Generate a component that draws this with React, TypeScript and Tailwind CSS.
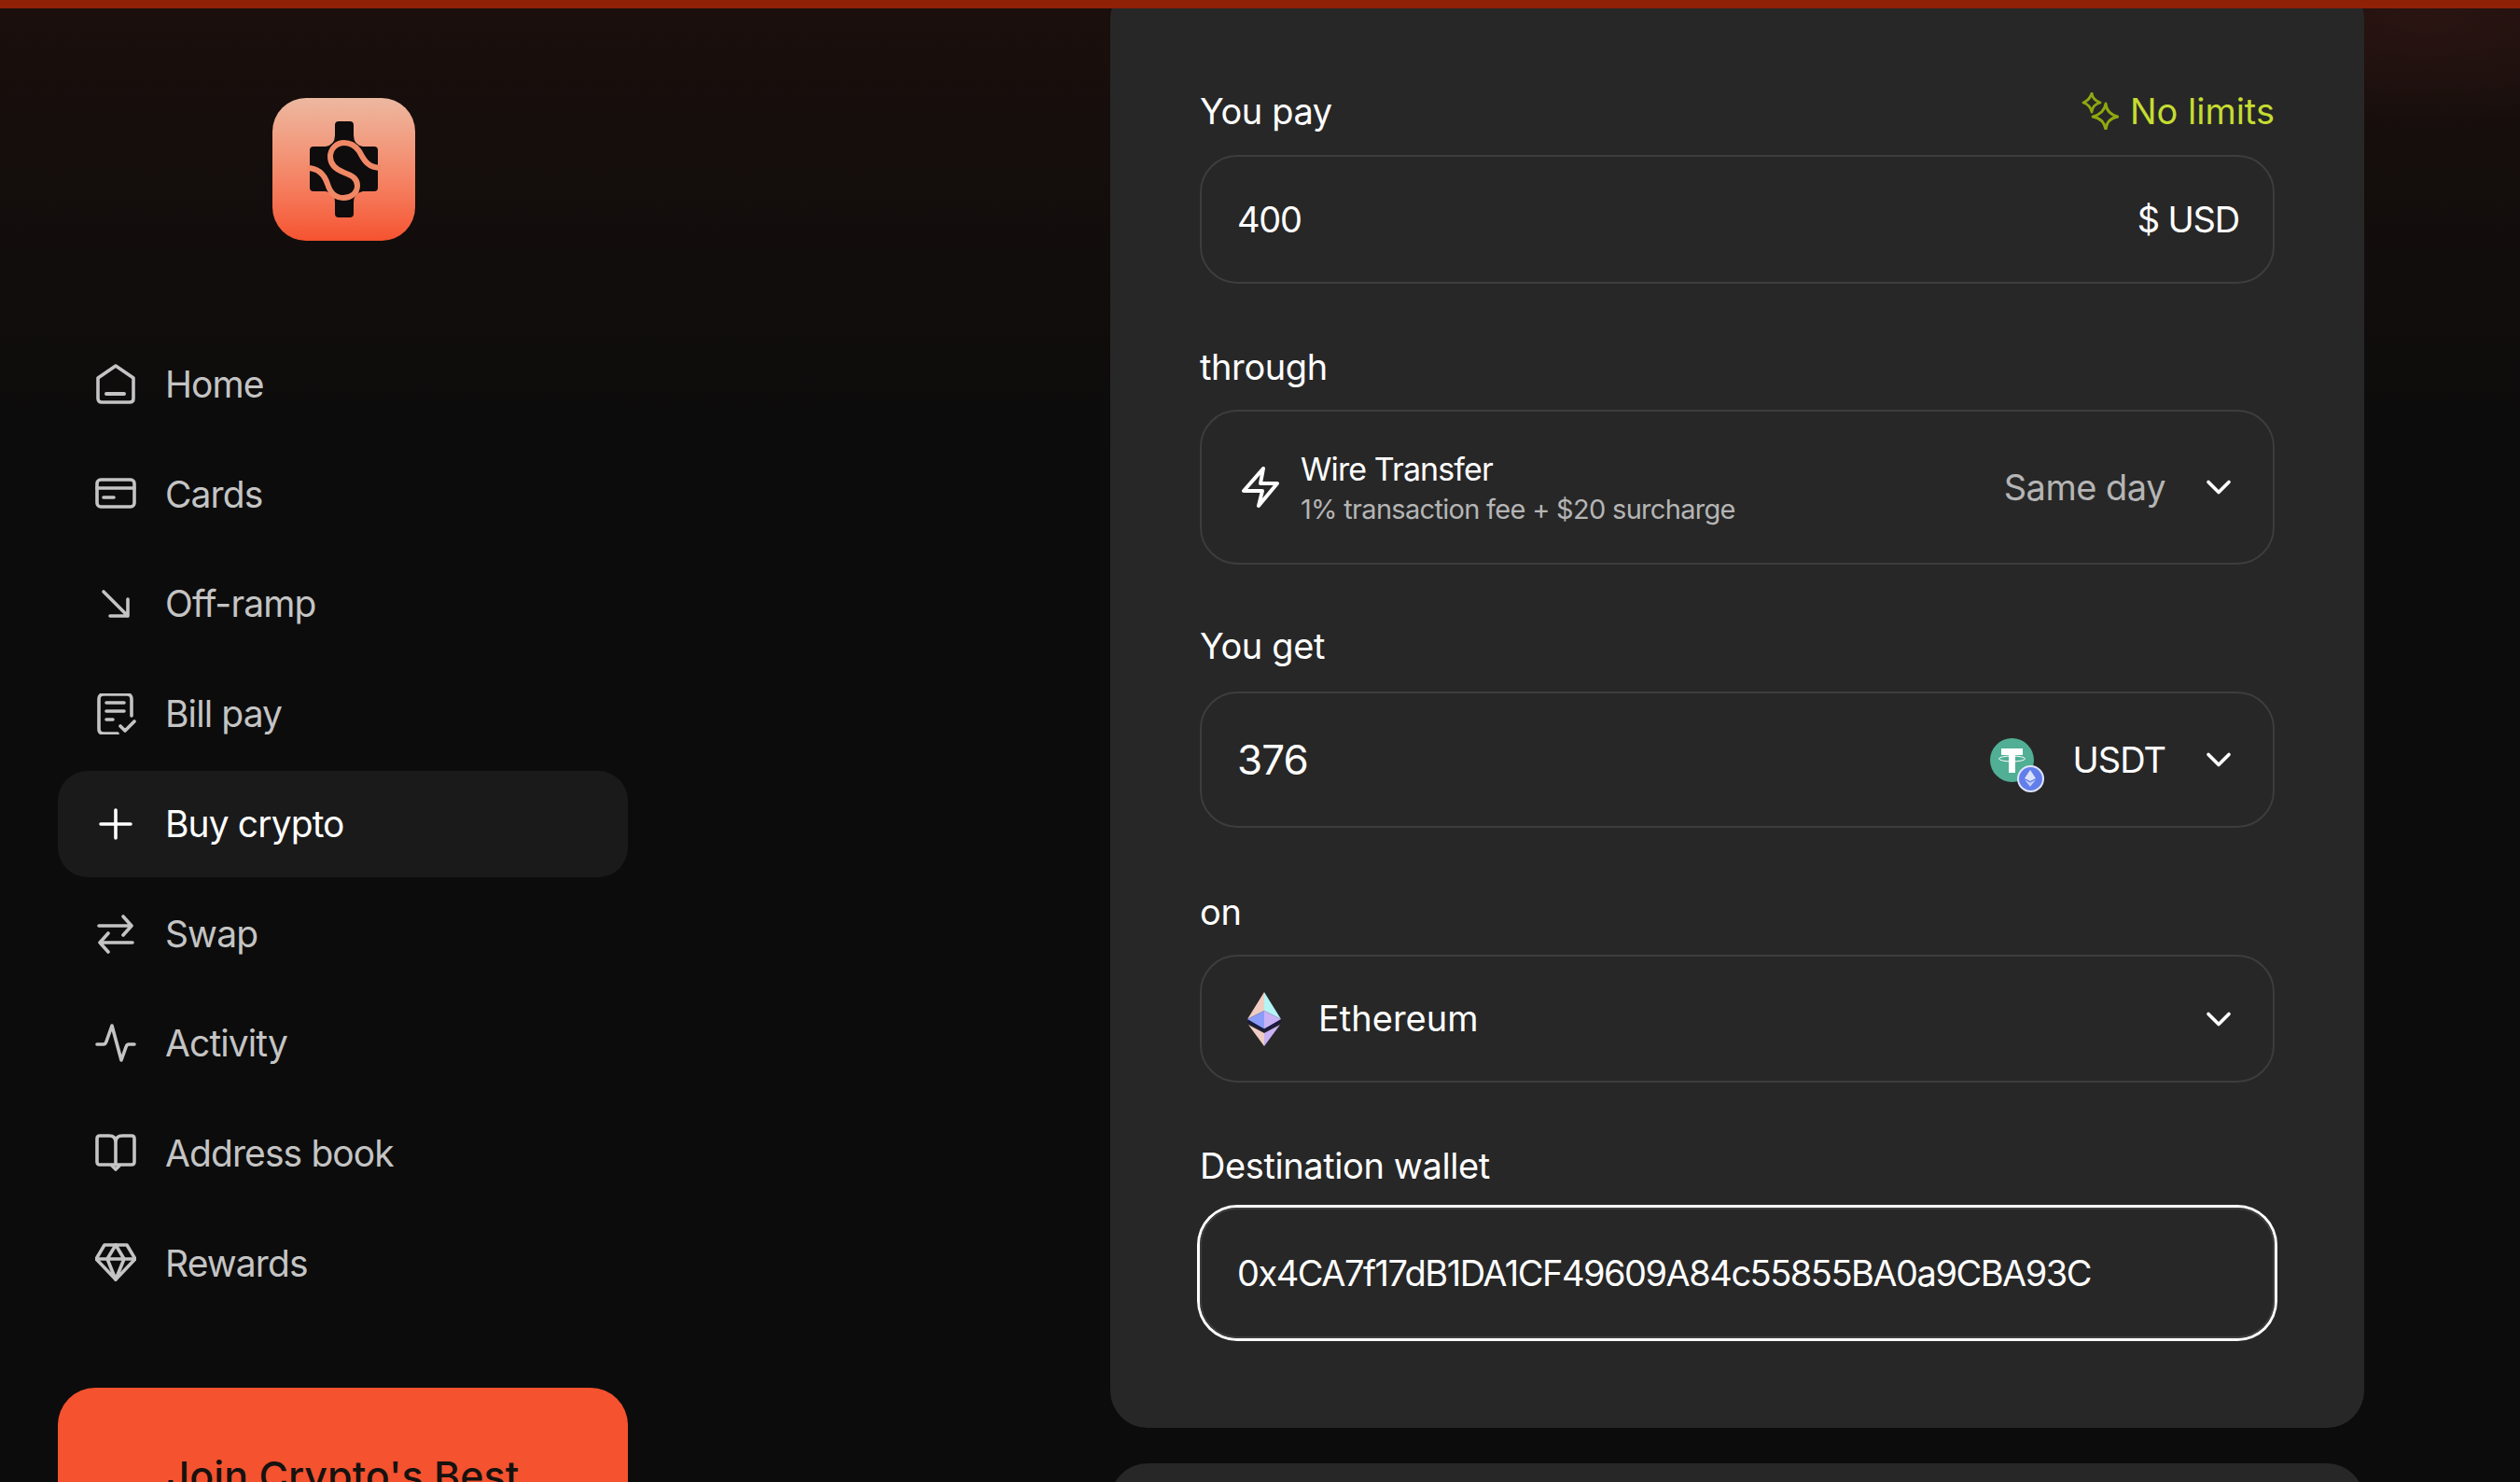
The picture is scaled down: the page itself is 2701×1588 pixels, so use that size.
import { ChevronDown } from "lucide-react";
import type { ReactNode } from "react";

const stroke = {
  fill: "none",
  stroke: "currentColor",
  strokeWidth: 3.6,
  strokeLinecap: "round" as const,
  strokeLinejoin: "round" as const,
};

function NavIcon({ children }: { children: ReactNode }) {
  return (
    <svg viewBox="0 0 44 44" className="h-[44px] w-[44px] shrink-0" {...stroke}>
      {children}
    </svg>
  );
}

const navItems: { label: string; active?: boolean; icon: ReactNode }[] = [
  {
    label: "Home",
    icon: (
      <>
        <path d="M22 2 L41 15 V37 Q41 41 37 41 H7 Q3 41 3 37 V15 Z" />
        <path d="M12 32 H31" strokeWidth={4} />
      </>
    ),
  },
  {
    label: "Cards",
    icon: (
      <>
        <rect x="2" y="6" width="40" height="29" rx="4" />
        <path d="M2 15 H42 M9 25 H20" />
      </>
    ),
  },
  {
    label: "Off-ramp",
    icon: <path d="M9 8 L35 34 M35 16 V34 H16" />,
  },
  {
    label: "Bill pay",
    icon: (
      <>
        <path d="M39 24 V6 Q39 1 34 1 H9 Q4 1 4 6 V38 Q4 43 9 43 H24" />
        <path d="M12 10 H31 M12 19 H31 M12 28 H19 M27 35 L32 40 L42 30" />
      </>
    ),
  },
  {
    label: "Buy crypto",
    active: true,
    icon: <path d="M22 7 V37 M6 22 H38" />,
  },
  {
    label: "Swap",
    icon: <path d="M4 13 H39 M30 3 L39 13 L30 23 M40 31 H5 M14 21 L5 31 L14 41" />,
  },
  {
    label: "Activity",
    icon: <path d="M2 22 H9 Q11 22 12 19 L18 2 L28 39 L33 25 Q34 22 36 22 H42" />,
  },
  {
    label: "Address book",
    icon: (
      <>
        <path d="M22 34 H5 Q2 34 2 31 V6 Q2 3 5 3 H15 Q22 3 22 10 Q22 3 29 3 H39 Q42 3 42 6 V31 Q42 34 39 34 H22 L22 10" />
        <path d="M18 35 L22 39 L26 35" />
      </>
    ),
  },
  {
    label: "Rewards",
    icon: (
      <>
        <path d="M10 2 H34 L43 17 L22 39 L1 17 Z" />
        <path d="M1 17 H43 M13 17 L22 39 L31 17 L22 2 Z" />
      </>
    ),
  },
];

function Logo() {
  return (
    <div className="ml-[1px] h-[153px] w-[153px] rounded-[36px] bg-gradient-to-b from-[#ecb8a0] to-[#f5522f]">
      <svg viewBox="0 0 153 153" className="h-full w-full">
        <path
          fill="#0e0c0c"
          d="M71 25 H83 Q87 25 87 29 V40 Q87 50 97 52 H109 Q113 52 113 56 V96 Q113 100 109 100 H97 Q87 102 87 112 V124 Q87 128 83 128 H71 Q67 128 67 124 V112 Q67 102 57 100 H44 Q40 100 40 96 V56 Q40 52 44 52 H57 Q67 50 67 40 V29 Q67 25 71 25 Z"
        />
        <path
          fill="none"
          stroke="#f08866"
          strokeWidth={6}
          d="M116 75 C101 75 97 64 93 57 C88 50 82 48 77 48 C68 48 62 55 62 63 C62 72 69 77 77 80 C85 83 91 86 91 94 C91 102 84 107 76 107 C68 107 62 102 59 92 C56 83 50 75 37 75"
        />
      </svg>
    </div>
  );
}

function Sparkles() {
  return (
    <svg viewBox="0 0 40 40" className="h-[40px] w-[40px]" fill="none" stroke="#8fa80f" strokeWidth={2.8} strokeLinejoin="round">
      <path d="M11 1 Q12 8 20 11 Q12 13 11 21 Q9 13 2 11 Q9 8 11 1 Z" />
      <path d="M26 12 Q27 23 39 26 Q27 28 26 40 Q24 28 12 26 Q24 23 26 12 Z" />
    </svg>
  );
}

function Bolt() {
  return (
    <svg viewBox="0 0 40 44" className="h-[44px] w-[40px] shrink-0" fill="none" stroke="white" strokeWidth={4} strokeLinejoin="round" strokeLinecap="round">
      <path d="M23 2 L2 26 H22 L18 42 L38 18 H20 Z" />
    </svg>
  );
}

function Chevron() {
  return <ChevronDown size={44} strokeWidth={2} className="shrink-0 text-white" />;
}

function EthColored() {
  return (
    <svg viewBox="0 0 36 58" className="h-[58px] w-[36px]">
      <path d="M18 0 L0 29 L18 20 Z" fill="#f0cdc2" />
      <path d="M18 0 L36 29 L18 20 Z" fill="#b4f3f6" />
      <path d="M0 29 L18 20 V40 Z" fill="#8a9cf9" />
      <path d="M36 29 L18 20 V40 Z" fill="#c8b2f5" />
      <path d="M1 35 L18 44 V58 Z" fill="#f0cdc2" />
      <path d="M35 35 L18 44 V58 Z" fill="#c8b2f5" />
      <path d="M0 31 L18 41 L36 31" fill="none" stroke="#1b1b3f" strokeWidth={3} />
    </svg>
  );
}

function UsdtBadge() {
  return (
    <div className="relative h-[47px] w-[47px] shrink-0 rounded-full bg-[#50af95]">
      <svg viewBox="0 0 47 47" className="h-full w-full">
        <path d="M12 11 H35 V18 H27 V37 H20 V18 H12 Z" fill="white" />
        <ellipse cx="23.5" cy="22" rx="14" ry="3" fill="none" stroke="white" strokeWidth={1} />
      </svg>
      <div className="absolute right-[-11px] bottom-[-11px] flex h-[29px] w-[29px] items-center justify-center rounded-full border-2 border-[#dfe4fb] bg-[#627eea]">
        <svg viewBox="0 0 16 24" className="h-[18px] w-[12px]">
          <path d="M8 0 L0 12 L8 16 L16 12 Z" fill="#dbe2fb" />
          <path d="M0 14 L8 24 L16 14 L8 18 Z" fill="#c3cdf7" />
        </svg>
      </div>
    </div>
  );
}

function Field({
  label,
  labelClass,
  right,
  children,
}: {
  label: string;
  labelClass: string;
  right?: ReactNode;
  children: ReactNode;
}) {
  return (
    <div>
      <div
        className={`flex h-[40px] items-center justify-between text-[38px] leading-[38px] tracking-[-0.4px] text-white ${labelClass}`}
      >
        <span>{label}</span>
        {right}
      </div>
      {children}
    </div>
  );
}

export default function App() {
  return (
    <div className="relative h-[1588px] w-full overflow-hidden bg-[#0c0c0c] bg-[radial-gradient(ellipse_320px_120px_at_2600px_20px,rgba(70,30,25,0.35),transparent),linear-gradient(to_bottom,#1b0f0d_0px,#150e0c_150px,#0c0c0c_480px)] font-['Inter',sans-serif]">
      <div className="absolute top-0 right-0 left-0 z-10 h-[9px] bg-[#8e2106]" />

      <div className="flex">
        <aside className="w-[735px] shrink-0 px-[62px] pt-[105px]">
          <div className="flex justify-center">
            <Logo />
          </div>

          <nav className="mt-[97px] flex flex-col gap-[3.75px]">
            {navItems.map((item) => (
              <div
                key={item.label}
                className={
                  item.active
                    ? "flex h-[114px] items-center gap-[31px] rounded-[32px] bg-[#1a1a1a] pl-[40px] text-[39px] tracking-[-0.9px] text-white"
                    : "flex h-[114px] items-center gap-[31px] rounded-[32px] pl-[40px] text-[39px] tracking-[-0.9px] text-[#c4c4c4]"
                }
              >
                <NavIcon>{item.icon}</NavIcon>
                <span>{item.label}</span>
              </div>
            ))}
          </nav>

          <div className="mt-[76px] rounded-[40px] bg-[#f5522f] px-[40px] pt-[62px] pb-[60px] text-center text-[43px] font-medium text-[#161210]">
            Join Crypto's Best
          </div>
        </aside>

        <main className="ml-[455px] w-[1344px] shrink-0">
          <section className="-mt-[20px] rounded-[40px] bg-[#272727] px-[96px] pt-[119px] pb-[96px]">
            <Field
              label="You pay"
              labelClass="mb-[27px]"
              right={
                <span className="flex items-center gap-[12px] tracking-normal text-[#c5dc32]">
                  <Sparkles />
                  No limits
                </span>
              }
            >
              <div className="flex h-[138px] items-center justify-between rounded-[40px] border-2 border-[#3d3d3d] pr-[36px] pl-[38px] text-[38px] tracking-[-1.2px] text-white">
                <span>400</span>
                <span>$ USD</span>
              </div>
            </Field>

            <div className="mt-[69px]">
              <Field label="through" labelClass="mb-[26px]">
                <div className="flex h-[166px] items-center rounded-[40px] border-2 border-[#3d3d3d] pr-[36px] pl-[43px] text-white">
                  <Bolt />
                  <div className="ml-[23px] flex flex-col pt-[3px]">
                    <span className="text-[34px] leading-[42px] tracking-[-0.9px]">Wire Transfer</span>
                    <span className="mt-[3px] text-[29px] leading-[38px] tracking-[-0.7px] text-[#b5b5b5]">
                      1% transaction fee + $20 surcharge
                    </span>
                  </div>
                  <span className="mr-[35px] ml-auto text-[38px] tracking-[-0.5px] text-[#b5b5b5]">Same day</span>
                  <Chevron />
                </div>
              </Field>
            </div>

            <div className="mt-[67px]">
              <Field label="You get" labelClass="mb-[29px]">
                <div className="flex h-[146px] items-center rounded-[40px] border-2 border-[#3d3d3d] pr-[36px] pl-[38px] text-white">
                  <span className="text-[44px] tracking-[-1px]">376</span>
                  <div className="ml-auto">
                    <UsdtBadge />
                  </div>
                  <span className="mr-[35px] ml-[42px] text-[38px] tracking-[-1px]">USDT</span>
                  <Chevron />
                </div>
              </Field>
            </div>

            <div className="mt-[70px]">
              <Field label="on" labelClass="mb-[26px]">
                <div className="flex h-[137px] items-center rounded-[40px] border-2 border-[#3d3d3d] pr-[36px] pl-[49px] text-[38px] text-white">
                  <EthColored />
                  <span className="ml-[40px]">Ethereum</span>
                  <div className="ml-auto">
                    <Chevron />
                  </div>
                </div>
              </Field>
            </div>

            <div className="mt-[69px]">
              <Field label="Destination wallet" labelClass="mb-[25px]">
                <div className="flex h-[140px] items-center rounded-[40px] border-2 border-[#3d3d3d] px-[38px] text-[38px] tracking-[-1.5px] text-white ring-[3px] ring-white">
                  0x4CA7f17dB1DA1CF49609A84c55855BA0a9CBA93C
                </div>
              </Field>
            </div>
          </section>

          <section className="mt-[38px] h-[300px] rounded-[40px] bg-[#272727]" />
        </main>
      </div>
    </div>
  );
}
